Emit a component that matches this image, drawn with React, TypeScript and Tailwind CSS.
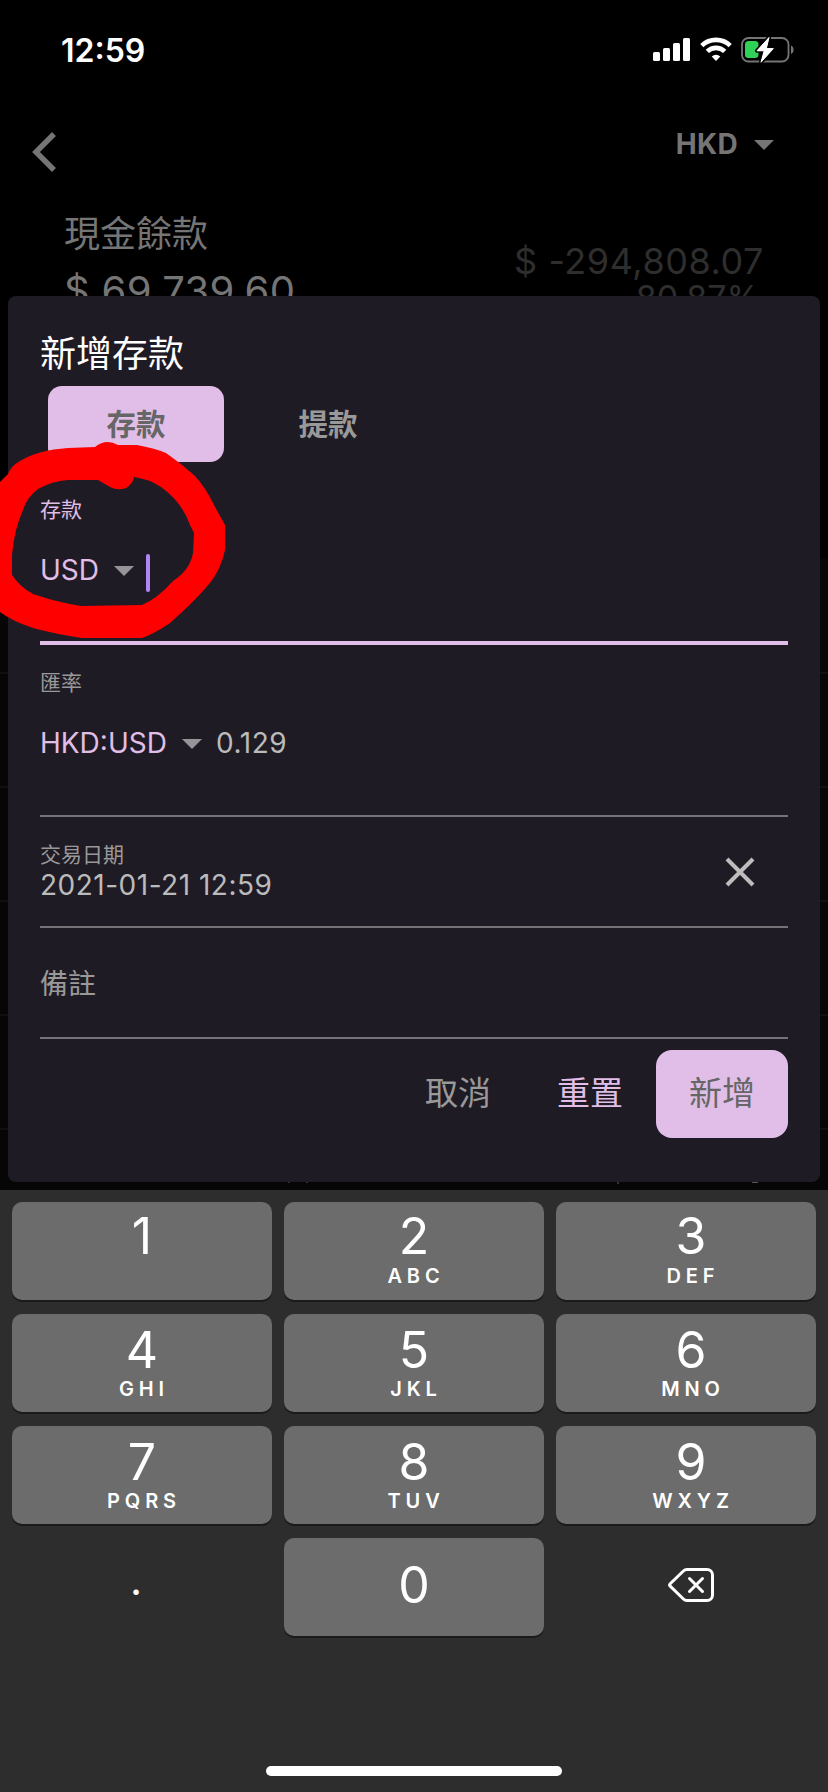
import { useState } from 'react';

const CJK = 'font-[Inter,"Noto_Sans_CJK_TC",sans-serif]';

const KEY_ROWS = [
  {
    className: 'pt-[9px]',
    gap: 'mt-[4px]',
    keys: [
      { digit: '1', letters: '' },
      { digit: '2', letters: 'ABC' },
      { digit: '3', letters: 'DEF' },
    ],
  },
  {
    className: 'pt-[11px]',
    gap: 'mt-[3px]',
    keys: [
      { digit: '4', letters: 'GHI' },
      { digit: '5', letters: 'JKL' },
      { digit: '6', letters: 'MNO' },
    ],
  },
  {
    className: 'pt-[11px]',
    gap: 'mt-[3px]',
    keys: [
      { digit: '7', letters: 'PQRS' },
      { digit: '8', letters: 'TUV' },
      { digit: '9', letters: 'WXYZ' },
    ],
  },
];

function Caret({ className }: { className?: string }) {
  return (
    <svg width="20" height="10" viewBox="0 0 20 10" className={className} fill="currentColor">
      <path d="M0 0h20L10 10z" />
    </svg>
  );
}

function StatusBar() {
  return (
    <div className="flex h-[100px] items-center justify-between pl-[61px] pr-[33px] text-white">
      <span className="mt-[2px] text-[32px] font-semibold leading-none">12:59</span>
      <div className="flex items-center">
        <svg width="38" height="26" viewBox="0 0 38 26" fill="currentColor">
          <rect x="0" y="15" width="7" height="9" rx="1.5" />
          <rect x="10" y="11" width="7" height="13" rx="1.5" />
          <rect x="20" y="6" width="7" height="18" rx="1.5" />
          <rect x="30" y="1" width="7" height="23" rx="1.5" />
        </svg>
        <svg width="32" height="26" viewBox="0 0 32 26" className="ml-[9px]" fill="none" stroke="currentColor" strokeWidth="4.6">
          <path d="M1.8 8.6a20.4 20.4 0 0 1 28.4 0" />
          <path d="M7.3 14.4a12.4 12.4 0 0 1 17.4 0" />
          <path d="M16 24l-4.3-4.4a6.2 6.2 0 0 1 8.6 0z" fill="currentColor" stroke="none" />
        </svg>
        <svg width="54" height="28" viewBox="0 0 54 28" className="ml-[9px]">
          <rect x="1" y="2" width="46.500" height="23.500" rx="6.500" fill="none" stroke="#757575" strokeWidth="1.800" />
          <path d="M50 9.500c3.500 1.500 3.500 7 0 8.500z" fill="#757575" />
          <rect x="4" y="5" width="13.500" height="17" rx="3.500" fill="#30d158" />
          <path d="M28 1.500 16 14.800h7.200L20 26.200 32.300 12.600h-7z" fill="#fff" stroke="#000" strokeWidth="4" paintOrder="stroke" strokeLinejoin="round" />
          <path d="M28 1.500 16 14.800h7.200L20 26.200 32.300 12.600h-7z" fill="#fff" stroke="#fff" strokeWidth="1" strokeLinejoin="round" />
        </svg>
      </div>
    </div>
  );
}

// account page that stays visible, dimmed, behind the dialog
function AccountPage() {
  return (
    <div className="flex-1 overflow-hidden text-[#757575]">
      <div className="flex h-[104px] items-start justify-between pl-8 pr-[54px]">
        <svg width="26" height="42" viewBox="0 0 26 42" className="mt-[31px]" fill="none" stroke="currentColor" strokeWidth="5.500">
          <path d="M22 3 4 21l18 18" />
        </svg>
        <div className="mt-[27px] flex items-center gap-4">
          <span className="text-[28px] font-bold leading-[34px] tracking-[0.3px]">HKD</span>
          <Caret className="mt-[2px]" />
        </div>
      </div>
      <div className="flex h-[130px] justify-between pl-16 pr-16">
        <div>
          <div className="mt-[4px] text-[36px] leading-[52px]">現金餘款</div>
          <div className="mt-[5px] text-[40px] leading-[52px] tracking-[0.35px]">$ 69,739.60</div>
        </div>
        <div className="pt-9 text-right text-[#2e2e2e]">
          <div className="text-[36px] leading-[42px] tracking-[0.55px]">$ -294,808.07</div>
          <div className="pr-1 text-[34px] leading-[31px]">80.87%</div>
        </div>
      </div>
      <div className="mt-[224px] h-[114px] bg-[#060606]" />
      {[0, 1, 2, 3, 4].map((row) => (
        <div key={row} className="h-[114px] border-t-2 border-[#101010] bg-[#060606]" />
      ))}
    </div>
  );
}

function DepositDialog() {
  const [tab, setTab] = useState<'deposit' | 'withdraw'>('deposit');

  return (
    <div className="absolute left-2 right-2 top-[296px] h-[886px] rounded-lg bg-[#1f1b24] px-8 pt-8">
      <h1 className="text-[36px] leading-[52px] text-white">新增存款</h1>
      <div className="mt-[6px] flex pl-2 text-[29.5px] font-semibold">
        <button
          onClick={() => setTab('deposit')}
          className={`h-[76px] w-44 rounded-[14px] ${tab === 'deposit' ? 'bg-[#e1bee7] text-[#666666]' : 'text-[#999999]'}`}
        >
          存款
        </button>
        <button
          onClick={() => setTab('withdraw')}
          className={`ml-4 h-[76px] w-44 rounded-[14px] ${tab === 'withdraw' ? 'bg-[#e1bee7] text-[#666666]' : 'text-[#999999]'}`}
        >
          提款
        </button>
      </div>

      {/* Amount */}
      <div className="h-[183px] border-b-4 border-[#e1bee7] pt-[33px]">
        <div className="text-[21px] leading-[30px] text-[#e1bee7]">存款</div>
        <div className="mt-[23px] flex h-[44px] items-center">
          <span className="text-[28px] text-[#e1bee7]">USD</span>
          <Caret className="ml-[15px] mt-[2px] text-[#969399]" />
          <span className="ml-3 mt-[5px] h-[38px] w-1 rounded-sm bg-[#b085f5]" />
        </div>
      </div>

      {/* Exchange rate */}
      <div className="h-[172px] border-b-2 border-[#757278] pt-[23px]">
        <div className="text-[21px] leading-[30px] text-[#999999]">匯率</div>
        <div className="mt-[23px] flex h-[44px] items-center text-[28px]">
          <span className="text-[#e1bee7]">HKD:USD</span>
          <Caret className="ml-[15px] mt-[2px] text-[#969399]" />
          <span className="ml-[14px] tracking-[0.6px] text-[#bbbbbb]">0.129</span>
        </div>
      </div>

      {/* Date */}
      <div className="flex h-[111px] items-center justify-between border-b-2 border-[#757278] pr-[33px]">
        <div className="mb-[3px]">
          <div className="text-[21px] leading-[30px] text-[#999999]">交易日期</div>
          <div className="text-[28px] leading-[30px] tracking-[0.5px] text-[#bbbbbb]">2021-01-21 12:59</div>
        </div>
        <svg width="30" height="30" viewBox="0 0 30 30" className="mt-[1px]" fill="none" stroke="#bdbdbd" strokeWidth="4">
          <path d="M2 2l26 26M28 2 2 28" />
        </svg>
      </div>

      {/* Notes */}
      <div className="flex h-[111px] items-center border-b-2 border-[#757278] pt-[2px] text-[28px] text-[#999999]">備註</div>

      <div className="mt-[11px] flex justify-end text-[33px]">
        <button className="h-[88px] w-[132px] text-[#999999]">取消</button>
        <button className="h-[88px] w-[132px] text-[#e1bee7]">重置</button>
        <button className="h-[88px] w-[132px] rounded-2xl bg-[#e1bee7] text-[#666666]">新增</button>
      </div>
    </div>
  );
}

function Keypad() {
  return (
    <div className="flex h-[602px] flex-col items-center bg-[#2d2d2d] px-3 pt-3 text-white">
      <div className="grid w-full grid-cols-3 gap-x-3 gap-y-[14px]">
        {KEY_ROWS.map((row) =>
          row.keys.map((key, col) => (
            <button
              key={key.digit}
              className={`flex h-[98px] flex-col items-center rounded-[10px] bg-[#6c6c6c] shadow-[0_2px_0_#1a1a1a] ${row.className} ${col === 2 ? 'pl-[10px]' : ''}`}
            >
              <span className="text-[50px] leading-[50px]">{key.digit}</span>
              <span className={`pl-[4px] text-[20px] font-semibold leading-[22px] tracking-[4.9px] ${row.gap}`}>{key.letters}</span>
            </button>
          ))
        )}
        <button className="h-[98px] pr-[12px] text-[42px] leading-[84px] pb-[14px]">.</button>
        <button className="h-[98px] rounded-[10px] bg-[#6c6c6c] pb-[4px] text-[50px] leading-[94px] shadow-[0_2px_0_#1a1a1a]">0</button>
        <button className="flex h-[98px] items-center justify-center pb-[4px] pl-[10px]">
          <svg width="46" height="34" viewBox="0 0 46 34" fill="none" stroke="currentColor" strokeWidth="3" strokeLinejoin="round" strokeLinecap="round">
            <path d="M19 1.500h20a5.500 5.500 0 0 1 5.500 5.500v20a5.500 5.500 0 0 1-5.500 5.500H19a5 5 0 0 1-3.600-1.500L2.200 18.200a1.700 1.700 0 0 1 0-2.400L15.400 3A5 5 0 0 1 19 1.500z" />
            <path d="M21.500 10.500l13 13M34.500 10.500l-13 13" />
          </svg>
        </button>
      </div>
      <div className="mb-4 mt-auto h-[10px] w-[296px] rounded-full bg-white" />
    </div>
  );
}

export default function App() {
  return (
    <div className={`relative flex h-[1792px] w-[828px] flex-col overflow-hidden bg-black ${CJK}`}>
      <div className="flex h-[1190px] flex-col overflow-hidden">
        <StatusBar />
        <AccountPage />
      </div>
      <Keypad />
      <DepositDialog />
      {/* Hand-drawn marker around the currency picker */}
      <svg width="240" height="220" viewBox="0 0 240 220" className="pointer-events-none absolute left-0 top-[430px]">
        <path
          fill="#ff0000"
          fillRule="evenodd"
          d="M0 52L8 44Q11 36 20 31Q38 20 68 18L95 17Q106 8 118 15L137 15Q154 18 166 23Q182 34 195 46Q206 58 214 75L225 95V120Q221 139 210 153Q193 173 170 193Q154 204 142 208H82Q55 204 33 198Q12 191 0 182zM98 50L110 57Q118 61 126 58Q133 54 134 47Q149 49 161 57Q182 72 190 95L194 103L193 123Q190 140 173 151Q157 169 142 175L81 176Q56 172 33 164Q20 157 12 145V125Q14 100 23 80Q27 67 38 59Q52 51 68 50z"
        />
      </svg>
      {/* tips of the list text showing under the dialog */}
      <svg width="480" height="2" viewBox="0 0 480 2" className="absolute left-[286px] top-[1182px]">
        <path d="M2 0h2v1h-2zM20 0h2v1h-2zM331 0h2v2h-2z" fill="#333333" />
        <path d="M466 0h6v1h-6z" fill="#5a5060" />
      </svg>
    </div>
  );
}
